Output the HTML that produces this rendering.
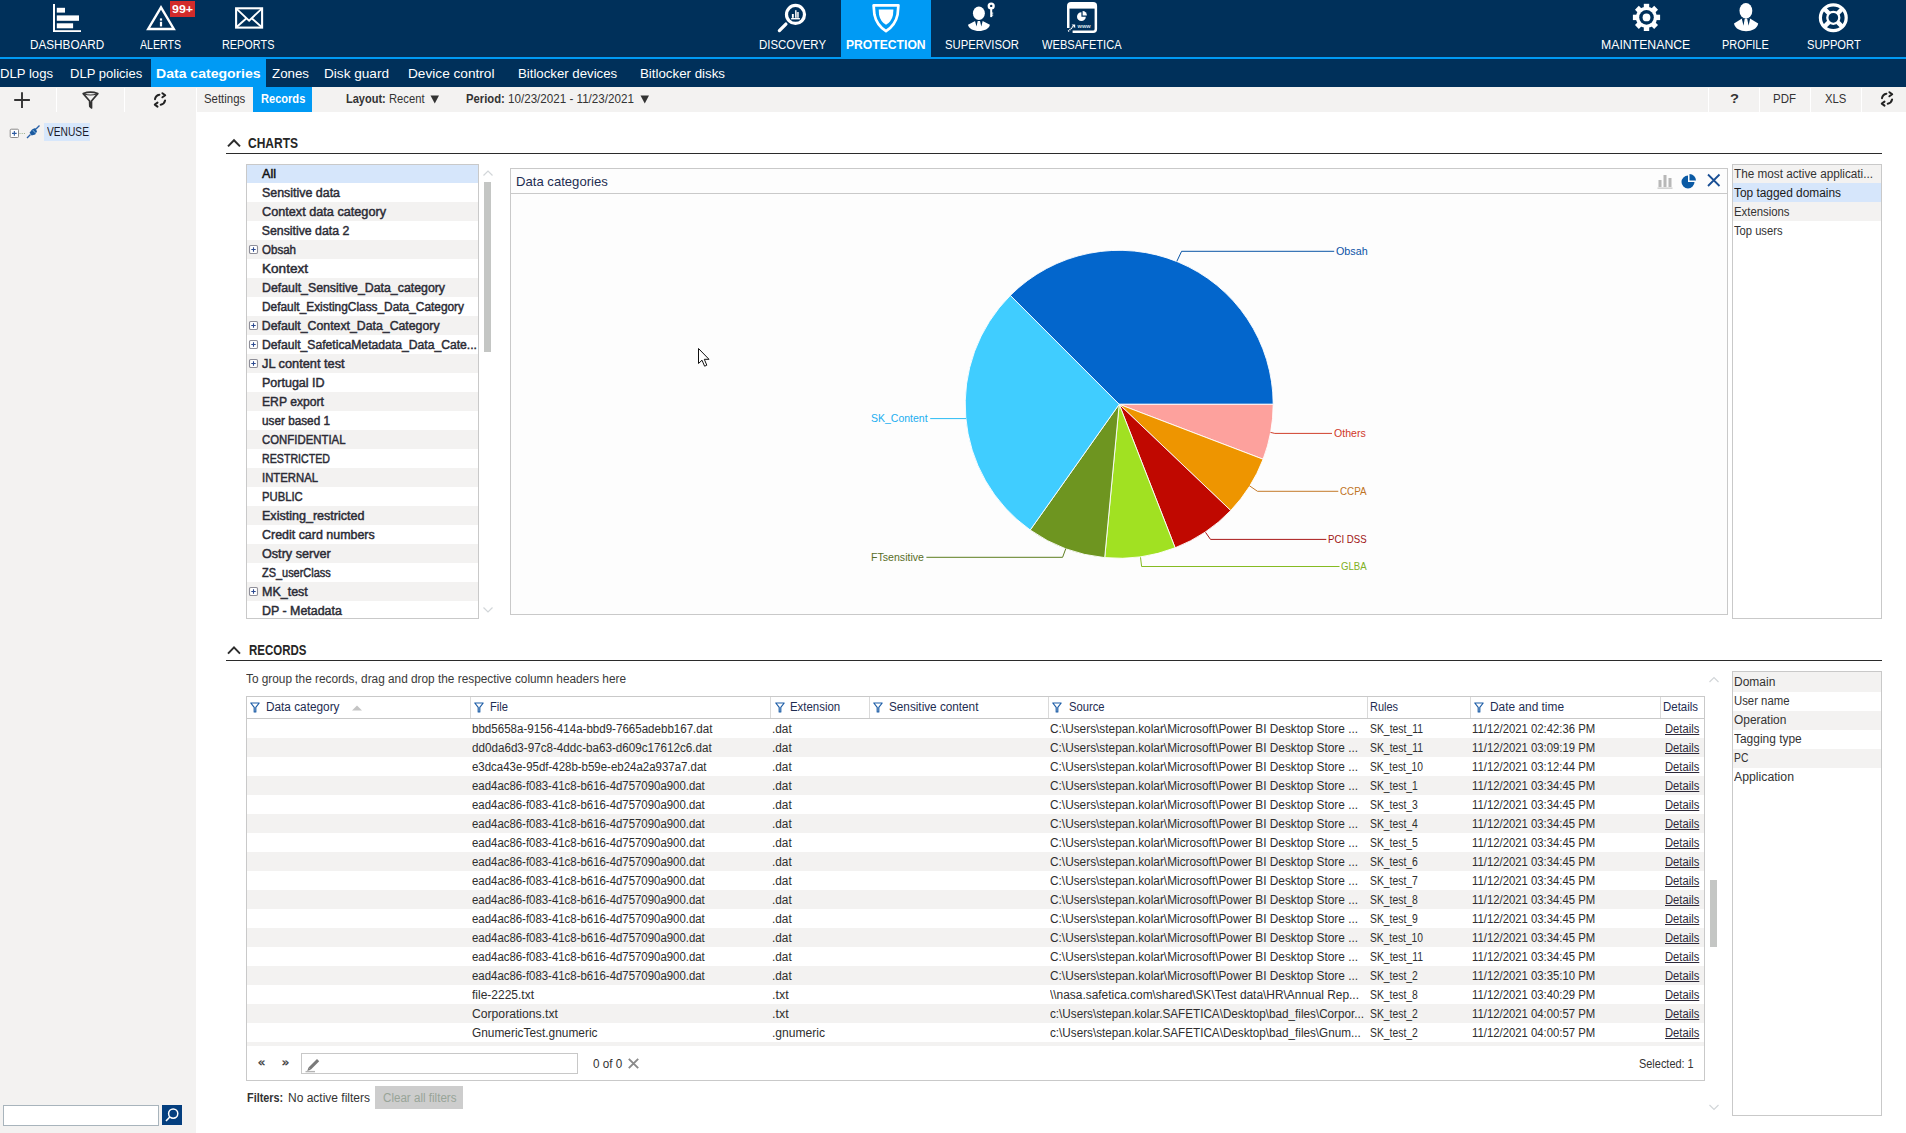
<!DOCTYPE html>
<html><head><meta charset="utf-8"><title>Safetica</title>
<style>
html,body{margin:0;padding:0;width:1906px;height:1133px;overflow:hidden;background:#fff;font-family:"Liberation Sans", sans-serif;}
.t{position:absolute;white-space:pre;line-height:1;}
</style></head><body>
<div style="position:absolute;left:0px;top:0px;width:1906px;height:57px;background:#00305a;"></div>
<div style="position:absolute;left:0px;top:57px;width:1906px;height:2px;background:#009af4;"></div>
<div style="position:absolute;left:0px;top:59px;width:1906px;height:28px;background:#00305a;"></div>
<div style="position:absolute;left:841px;top:0px;width:90px;height:57px;background:#009af4;"></div>
<div class="t" style="left:30.2px;top:38.43px;font-size:13.2px;font-weight:400;color:#ffffff;transform:scaleX(0.8893);transform-origin:0 0;">DASHBOARD</div>
<div class="t" style="left:140.3px;top:38.43px;font-size:13.2px;font-weight:400;color:#ffffff;transform:scaleX(0.8046);transform-origin:0 0;">ALERTS</div>
<div class="t" style="left:222.2px;top:38.43px;font-size:13.2px;font-weight:400;color:#ffffff;transform:scaleX(0.8250);transform-origin:0 0;">REPORTS</div>
<div class="t" style="left:759px;top:38.43px;font-size:13.2px;font-weight:400;color:#ffffff;transform:scaleX(0.8650);transform-origin:0 0;">DISCOVERY</div>
<div class="t" style="left:846.4px;top:38.43px;font-size:13.2px;font-weight:700;color:#ffffff;transform:scaleX(0.9207);transform-origin:0 0;">PROTECTION</div>
<div class="t" style="left:945px;top:38.43px;font-size:13.2px;font-weight:400;color:#ffffff;transform:scaleX(0.8581);transform-origin:0 0;">SUPERVISOR</div>
<div class="t" style="left:1042.4px;top:38.43px;font-size:13.2px;font-weight:400;color:#ffffff;transform:scaleX(0.8420);transform-origin:0 0;">WEBSAFETICA</div>
<div class="t" style="left:1601.4px;top:38.43px;font-size:13.2px;font-weight:400;color:#ffffff;transform:scaleX(0.9304);transform-origin:0 0;">MAINTENANCE</div>
<div class="t" style="left:1722px;top:38.43px;font-size:13.2px;font-weight:400;color:#ffffff;transform:scaleX(0.8275);transform-origin:0 0;">PROFILE</div>
<div class="t" style="left:1807px;top:38.43px;font-size:13.2px;font-weight:400;color:#ffffff;transform:scaleX(0.8455);transform-origin:0 0;">SUPPORT</div>
<svg style="position:absolute;left:50px;top:2px" width="34" height="32" viewBox="0 0 34 32"><rect x="3" y="2" width="2" height="28" fill="#ffffff"/><rect x="3" y="28.2" width="28" height="1.8" fill="#ffffff"/><rect x="6.8" y="5.8" width="8.2" height="4.8" fill="#ffffff"/><rect x="6.8" y="13.4" width="22.2" height="5.4" fill="#ffffff"/><rect x="6.8" y="21.3" width="16.3" height="5" fill="#ffffff"/></svg>
<svg style="position:absolute;left:144px;top:3px" width="34" height="30" viewBox="0 0 34 30"><path d="M17 4.3 L29.8 26 L4.2 26 Z" fill="none" stroke="#ffffff" stroke-width="2.4" stroke-linejoin="miter"/><rect x="15.9" y="15.4" width="2.2" height="2.2" fill="#ffffff"/><rect x="15.9" y="18.8" width="2.2" height="4.6" fill="#ffffff"/></svg>
<div style="position:absolute;left:170px;top:1px;width:25px;height:16px;background:#d22b2b;"></div>
<div class="t" style="left:171.6px;top:4.29px;font-size:11px;font-weight:700;color:#ffffff;transform:scaleX(1.1247);transform-origin:0 0;">99+</div>
<svg style="position:absolute;left:233px;top:5px" width="33" height="26" viewBox="0 0 33 26"><rect x="3.1" y="3.3" width="26" height="19.3" fill="none" stroke="#ffffff" stroke-width="2.1"/><path d="M3.6 3.9 L16.1 15.6 L28.6 3.9" fill="none" stroke="#ffffff" stroke-width="1.9"/><path d="M3.6 22 L13.2 13.5 M28.6 22 L19 13.5" fill="none" stroke="#ffffff" stroke-width="1.9"/></svg>
<svg style="position:absolute;left:776px;top:1px" width="34" height="34" viewBox="0 0 34 34"><circle cx="19.5" cy="13.45" r="9" fill="none" stroke="#ffffff" stroke-width="3.2"/><path d="M3.4 29.6 L9.9 23.1" stroke="#ffffff" stroke-width="3.3" stroke-linecap="round"/><rect x="15.9" y="13" width="1.9" height="3.8" fill="#ffffff"/><rect x="19.1" y="9.2" width="1.4" height="7.6" fill="#ffffff"/><rect x="20.5" y="11" width="2.4" height="5.8" fill="#c8d0d8"/><rect x="15.1" y="17" width="8.8" height="1.4" fill="#ffffff"/></svg>
<svg style="position:absolute;left:868px;top:1px" width="36" height="34" viewBox="0 0 36 34"><path d="M5.6 4.3 L30.4 4.3 L29.6 13.5 Q27.5 24 18 30.2 Q8.5 24 6.4 13.5 Z" fill="none" stroke="#ffffff" stroke-width="2.7" stroke-linejoin="round"/><path d="M10.7 8.6 L25.4 8.6 L25 14 Q23.5 20.8 18 23.8 Q12.5 20.8 11.1 14 Z" fill="#ffffff"/></svg>
<svg style="position:absolute;left:964px;top:1px" width="34" height="34" viewBox="0 0 34 34"><ellipse cx="14.9" cy="12.2" rx="5.95" ry="6.8" fill="#ffffff"/><path d="M4 23.8 L11.2 19.9 L18.6 19.9 L25.9 23.8 C24.4 32.1 5.5 32.1 4 23.8 Z" fill="#ffffff"/><path d="M10.9 19.6 L13.8 19.6 L12.5 25.6 Z M15.9 19.6 L18.8 19.6 L17.3 25.6 Z" fill="#00305a"/><circle cx="27.2" cy="5" r="3.6" fill="#ffffff"/><circle cx="27.2" cy="4.9" r="1.2" fill="#00305a"/><rect x="26.2" y="7.5" width="2" height="8.6" fill="#ffffff"/><rect x="28" y="11.6" width="1.2" height="1" fill="#ffffff"/><rect x="28" y="13.6" width="1.2" height="1" fill="#ffffff"/></svg>
<svg style="position:absolute;left:1064px;top:1px" width="36" height="34" viewBox="0 0 36 34"><path d="M4.25 27 L4.25 5 Q4.25 2.2 7 2.2 L29.1 2.2 Q31.85 2.2 31.85 5 L31.85 28 Q31.85 30.75 29.1 30.75 L8.6 30.75" fill="none" stroke="#ffffff" stroke-width="2.5"/><rect x="4" y="2" width="28.1" height="5.6" fill="#ffffff"/><path d="M17.4 11.3 A4.4 4.4 0 1 0 21.8 15.7 L17.4 15.7 Z" fill="#ffffff"/><path d="M18.6 10.1 A4.3 4.3 0 0 1 22.9 14.4 L18.6 14.4 Z" fill="#ffffff"/><path d="M4.2 30.4 L9.6 25" stroke="#ffffff" stroke-width="1.5" stroke-dasharray="1.2 0.7"/><path d="M7.6 23.6 L11.2 23.6 L11.2 27.2 Z" fill="#ffffff"/><text x="13.6" y="27.3" font-family="Liberation Sans" font-size="5.6" font-weight="700" fill="#dde4ea">www</text></svg>
<svg style="position:absolute;left:1631.5px;top:3.4px" width="29" height="29" viewBox="0 0 29 29"><rect x="11.8" y="0.8" width="5.4" height="6" fill="#ffffff" transform="rotate(0 14.5 14.4)"/><rect x="11.8" y="0.8" width="5.4" height="6" fill="#ffffff" transform="rotate(45 14.5 14.4)"/><rect x="11.8" y="0.8" width="5.4" height="6" fill="#ffffff" transform="rotate(90 14.5 14.4)"/><rect x="11.8" y="0.8" width="5.4" height="6" fill="#ffffff" transform="rotate(135 14.5 14.4)"/><rect x="11.8" y="0.8" width="5.4" height="6" fill="#ffffff" transform="rotate(180 14.5 14.4)"/><rect x="11.8" y="0.8" width="5.4" height="6" fill="#ffffff" transform="rotate(225 14.5 14.4)"/><rect x="11.8" y="0.8" width="5.4" height="6" fill="#ffffff" transform="rotate(270 14.5 14.4)"/><rect x="11.8" y="0.8" width="5.4" height="6" fill="#ffffff" transform="rotate(315 14.5 14.4)"/><circle cx="14.5" cy="14.4" r="10.6" fill="#ffffff"/><circle cx="14.5" cy="14.4" r="7.3" fill="#00305a"/><circle cx="14.5" cy="14.4" r="3.9" fill="#ffffff"/></svg>
<svg style="position:absolute;left:1731px;top:1px" width="30" height="32" viewBox="0 0 30 32"><ellipse cx="14.9" cy="9.65" rx="6.4" ry="7.75" fill="#ffffff"/><path d="M3 22.5 L11 17.4 L19 17.4 L27.2 22.5 C25.6 32.7 4.6 32.7 3 22.5 Z" fill="#ffffff"/><path d="M10.7 17.2 L13.8 17.2 L12.5 24.8 Z M16.1 17.2 L19.2 17.2 L17.6 24.8 Z" fill="#00305a"/></svg>
<svg style="position:absolute;left:1817px;top:1px" width="34" height="34" viewBox="0 0 34 34"><circle cx="16.3" cy="16.8" r="12.9" fill="none" stroke="#ffffff" stroke-width="3.2"/><circle cx="16.3" cy="16.8" r="6" fill="none" stroke="#ffffff" stroke-width="2.3"/><g stroke="#ffffff" stroke-width="4.4"><path d="M7.3 7.8 L12 12.5 M25.3 7.8 L20.6 12.5 M7.3 25.8 L12 21.1 M25.3 25.8 L20.6 21.1"/></g></svg>
<div style="position:absolute;left:151px;top:59px;width:115px;height:28px;background:#009af4;"></div>
<div class="t" style="left:0px;top:66.89px;font-size:13.6px;font-weight:400;color:#ffffff;transform:scaleX(0.9650);transform-origin:0 0;">DLP logs</div>
<div class="t" style="left:69.5px;top:66.89px;font-size:13.6px;font-weight:400;color:#ffffff;transform:scaleX(0.9587);transform-origin:0 0;">DLP policies</div>
<div class="t" style="left:156.4px;top:66.89px;font-size:13.6px;font-weight:700;color:#ffffff;transform:scaleX(1.0331);transform-origin:0 0;">Data categories</div>
<div class="t" style="left:272px;top:66.89px;font-size:13.6px;font-weight:400;color:#ffffff;transform:scaleX(0.9793);transform-origin:0 0;">Zones</div>
<div class="t" style="left:324px;top:66.89px;font-size:13.6px;font-weight:400;color:#ffffff;">Disk guard</div>
<div class="t" style="left:408.3px;top:66.89px;font-size:13.6px;font-weight:400;color:#ffffff;transform:scaleX(1.0042);transform-origin:0 0;">Device control</div>
<div class="t" style="left:517.5px;top:66.89px;font-size:13.6px;font-weight:400;color:#ffffff;transform:scaleX(0.9725);transform-origin:0 0;">Bitlocker devices</div>
<div class="t" style="left:639.7px;top:66.89px;font-size:13.6px;font-weight:400;color:#ffffff;transform:scaleX(0.9784);transform-origin:0 0;">Bitlocker disks</div>
<div style="position:absolute;left:0px;top:87px;width:1906px;height:25px;background:#f3f2f1;"></div>
<div style="position:absolute;left:253px;top:87px;width:59px;height:25px;background:#009af4;"></div>
<div style="position:absolute;left:196px;top:112px;width:1710px;height:1021px;background:#ffffff;"></div>
<div style="position:absolute;left:56px;top:88px;width:1px;height:24px;background:#ffffff;"></div>
<div style="position:absolute;left:124px;top:88px;width:1px;height:24px;background:#ffffff;"></div>
<div style="position:absolute;left:195.5px;top:88px;width:1px;height:24px;background:#ffffff;"></div>
<div style="position:absolute;left:1708px;top:88px;width:1px;height:24px;background:#ffffff;"></div>
<div style="position:absolute;left:1759px;top:88px;width:1px;height:24px;background:#ffffff;"></div>
<div style="position:absolute;left:1810px;top:88px;width:1px;height:24px;background:#ffffff;"></div>
<div style="position:absolute;left:1861px;top:88px;width:1px;height:24px;background:#ffffff;"></div>
<div class="t" style="left:204.4px;top:92.73px;font-size:12.6px;font-weight:400;color:#333333;transform:scaleX(0.9052);transform-origin:0 0;">Settings</div>
<div class="t" style="left:260.7px;top:92.73px;font-size:12.6px;font-weight:700;color:#ffffff;transform:scaleX(0.8789);transform-origin:0 0;">Records</div>
<div class="t" style="left:346.4px;top:92.73px;font-size:12.6px;font-weight:700;color:#333333;transform:scaleX(0.8750);transform-origin:0 0;">Layout:</div>
<div class="t" style="left:389.4px;top:92.73px;font-size:12.6px;font-weight:400;color:#333333;transform:scaleX(0.8896);transform-origin:0 0;">Recent</div>
<svg style="position:absolute;left:430px;top:95px" width="10" height="9" viewBox="0 0 10 9"><path d="M0.5 0.5 L9 0.5 L4.75 8.5 Z" fill="#333333"/></svg>
<div class="t" style="left:466.4px;top:92.73px;font-size:12.6px;font-weight:700;color:#333333;transform:scaleX(0.8942);transform-origin:0 0;">Period:</div>
<div class="t" style="left:508.4px;top:92.73px;font-size:12.6px;font-weight:400;color:#333333;transform:scaleX(0.9235);transform-origin:0 0;">10/23/2021 - 11/23/2021</div>
<svg style="position:absolute;left:640px;top:95px" width="10" height="9" viewBox="0 0 10 9"><path d="M0.5 0.5 L9 0.5 L4.75 8.5 Z" fill="#333333"/></svg>
<div class="t" style="left:1729.7px;top:92.40px;font-size:13px;font-weight:700;color:#333333;transform:scaleX(1.1316);transform-origin:0 0;">?</div>
<div class="t" style="left:1773px;top:92.73px;font-size:12.6px;font-weight:400;color:#333333;transform:scaleX(0.9132);transform-origin:0 0;">PDF</div>
<div class="t" style="left:1824.6px;top:92.73px;font-size:12.6px;font-weight:400;color:#333333;transform:scaleX(0.8987);transform-origin:0 0;">XLS</div>
<svg style="position:absolute;left:12px;top:90px" width="20" height="20" viewBox="0 0 20 20"><path d="M2.2 10 L17.9 10 M10 2.3 L10 18" stroke="#333" stroke-width="1.9"/></svg>
<svg style="position:absolute;left:80px;top:90px" width="21" height="20" viewBox="0 0 21 20"><path d="M3.2 3.6 Q10.6 0.8 17.8 3.6 L11.5 11 L11.5 18 L9.8 16.3 L9.6 11 Z" fill="none" stroke="#333" stroke-width="1.7" stroke-linejoin="round"/><path d="M4 4 Q10.5 6 17 4" fill="none" stroke="#333" stroke-width="1.2"/><path d="M9.8 12 L11.5 12 L11.5 18 L9.8 16 Z" fill="#333"/></svg>
<svg style="position:absolute;left:151px;top:90px" width="18" height="19" viewBox="0 0 18 19"><g fill="none" stroke="#222" stroke-width="2" stroke-linecap="round" stroke-linejoin="round"><path d="M4 9.2 Q4.6 5.3 8.4 4.7"/><path d="M11.4 3.2 L14.2 5.3 L11.4 7.3"/><path d="M14.1 10.4 Q13.4 14 9.7 14.7"/><path d="M6.5 12.6 L3.8 14.6 L6.5 16.6"/></g></svg>
<svg style="position:absolute;left:1878px;top:89px" width="18" height="19" viewBox="0 0 18 19"><g fill="none" stroke="#222" stroke-width="2" stroke-linecap="round" stroke-linejoin="round"><path d="M4 9.2 Q4.6 5.3 8.4 4.7"/><path d="M11.4 3.2 L14.2 5.3 L11.4 7.3"/><path d="M14.1 10.4 Q13.4 14 9.7 14.7"/><path d="M6.5 12.6 L3.8 14.6 L6.5 16.6"/></g></svg>
<div style="position:absolute;left:0px;top:112px;width:196px;height:1021px;background:#f3f2f1;"></div>
<div style="position:absolute;left:44px;top:123px;width:46px;height:18px;background:#d7e7fb;"></div>
<div class="t" style="left:47px;top:125.79px;font-size:12.3px;font-weight:400;color:#1a1a2a;transform:scaleX(0.8304);transform-origin:0 0;">VENUSE</div>
<svg style="position:absolute;left:9px;top:128px" width="11" height="11" viewBox="0 0 11 11"><rect x="1.2" y="1.2" width="8.3" height="8.3" rx="1" fill="#fff" stroke="#8a8a8a" stroke-width="1"/><path d="M3 5.35 L7.7 5.35 M5.35 3 L5.35 7.7" stroke="#2c5aa0" stroke-width="1.1"/></svg>
<svg style="position:absolute;left:19px;top:132px" width="7" height="3" viewBox="0 0 7 3"><path d="M0.5 1.5 L6 1.5" stroke="#9ab08a" stroke-width="1" stroke-dasharray="1 1.2"/></svg>
<svg style="position:absolute;left:26px;top:125px" width="15" height="14" viewBox="0 0 15 14"><path d="M1 13 L4.5 9.5 M10 4 L13.5 0.6" stroke="#2860a8" stroke-width="1.4"/><path d="M3.6 7.8 L6.2 4.2 L9.4 3 L11 6.4 L9.2 9.6 L5.6 10.6 Z" fill="#1a5aa0"/><path d="M6.5 5 L9.8 8.2" stroke="#9cc8e8" stroke-width="0.9"/></svg>
<div style="position:absolute;left:3px;top:1105px;width:156px;height:21px;box-sizing:border-box;border:1px solid #a8b4bc;background:#ffffff;"></div>
<div style="position:absolute;left:162px;top:1105px;width:20px;height:20px;background:#043f7f;"></div>
<svg style="position:absolute;left:162px;top:1105px" width="20" height="20" viewBox="0 0 20 20"><circle cx="11.2" cy="8.6" r="4.6" fill="none" stroke="#fff" stroke-width="1.5"/><path d="M4 16 L7.8 12" stroke="#fff" stroke-width="1.6"/></svg>
<svg style="position:absolute;left:226px;top:136px" width="16" height="13" viewBox="0 0 16 13"><path d="M2 10.4 L8 4.2 L14 10.4" fill="none" stroke="#2d2d2d" stroke-width="2"/></svg>
<div class="t" style="left:248px;top:135.88px;font-size:14.2px;font-weight:700;color:#262626;transform:scaleX(0.8457);transform-origin:0 0;">CHARTS</div>
<div style="position:absolute;left:226px;top:153px;width:1656px;height:1px;background:#2b2b2b;"></div>
<div style="position:absolute;left:246px;top:164px;width:233px;height:455px;box-sizing:border-box;border:1px solid #c9c9c9;background:#ffffff;"></div>
<div style="position:absolute;left:247px;top:165px;width:231px;height:18px;background:#d6e6fb;"></div>
<div class="t" style="left:261.8px;top:168.19px;font-size:12.3px;font-weight:400;color:#111;transform:scaleX(1.0240);transform-origin:0 0;-webkit-text-stroke:0.45px currentColor;">All</div>
<div class="t" style="left:261.8px;top:187.19px;font-size:12.3px;font-weight:400;color:#2b2b35;transform:scaleX(1.0097);transform-origin:0 0;-webkit-text-stroke:0.45px currentColor;">Sensitive data</div>
<div style="position:absolute;left:247px;top:202px;width:231px;height:19px;background:#f3f2f1;"></div>
<div class="t" style="left:261.8px;top:206.19px;font-size:12.3px;font-weight:400;color:#2b2b35;transform:scaleX(1.0306);transform-origin:0 0;-webkit-text-stroke:0.45px currentColor;">Context data category</div>
<div class="t" style="left:261.8px;top:225.19px;font-size:12.3px;font-weight:400;color:#2b2b35;-webkit-text-stroke:0.45px currentColor;">Sensitive data 2</div>
<div style="position:absolute;left:247px;top:240px;width:231px;height:19px;background:#f3f2f1;"></div>
<div class="t" style="left:261.8px;top:244.19px;font-size:12.3px;font-weight:400;color:#2b2b35;transform:scaleX(0.9383);transform-origin:0 0;-webkit-text-stroke:0.45px currentColor;">Obsah</div>
<svg style="position:absolute;left:248px;top:244px" width="11" height="11" viewBox="0 0 11 11"><rect x="1.5" y="1.5" width="8" height="8" rx="1.2" fill="#fff" stroke="#8e8e98" stroke-width="1.1"/><path d="M3.3 5.5 L7.7 5.5 M5.5 3.3 L5.5 7.7" stroke="#2c4a90" stroke-width="1.1"/></svg>
<div class="t" style="left:261.8px;top:263.19px;font-size:12.3px;font-weight:400;color:#2b2b35;transform:scaleX(1.1030);transform-origin:0 0;-webkit-text-stroke:0.45px currentColor;">Kontext</div>
<div style="position:absolute;left:247px;top:278px;width:231px;height:19px;background:#f3f2f1;"></div>
<div class="t" style="left:261.8px;top:282.19px;font-size:12.3px;font-weight:400;color:#2b2b35;transform:scaleX(1.0027);transform-origin:0 0;-webkit-text-stroke:0.45px currentColor;">Default_Sensitive_Data_category</div>
<div class="t" style="left:261.8px;top:301.19px;font-size:12.3px;font-weight:400;color:#2b2b35;transform:scaleX(0.9658);transform-origin:0 0;-webkit-text-stroke:0.45px currentColor;">Default_ExistingClass_Data_Category</div>
<div style="position:absolute;left:247px;top:316px;width:231px;height:19px;background:#f3f2f1;"></div>
<div class="t" style="left:261.8px;top:320.19px;font-size:12.3px;font-weight:400;color:#2b2b35;-webkit-text-stroke:0.45px currentColor;">Default_Context_Data_Category</div>
<svg style="position:absolute;left:248px;top:320px" width="11" height="11" viewBox="0 0 11 11"><rect x="1.5" y="1.5" width="8" height="8" rx="1.2" fill="#fff" stroke="#8e8e98" stroke-width="1.1"/><path d="M3.3 5.5 L7.7 5.5 M5.5 3.3 L5.5 7.7" stroke="#2c4a90" stroke-width="1.1"/></svg>
<div class="t" style="left:261.8px;top:339.19px;font-size:12.3px;font-weight:400;color:#2b2b35;transform:scaleX(0.9890);transform-origin:0 0;-webkit-text-stroke:0.45px currentColor;">Default_SafeticaMetadata_Data_Cate...</div>
<svg style="position:absolute;left:248px;top:339px" width="11" height="11" viewBox="0 0 11 11"><rect x="1.5" y="1.5" width="8" height="8" rx="1.2" fill="#fff" stroke="#8e8e98" stroke-width="1.1"/><path d="M3.3 5.5 L7.7 5.5 M5.5 3.3 L5.5 7.7" stroke="#2c4a90" stroke-width="1.1"/></svg>
<div style="position:absolute;left:247px;top:354px;width:231px;height:19px;background:#f3f2f1;"></div>
<div class="t" style="left:261.8px;top:358.19px;font-size:12.3px;font-weight:400;color:#2b2b35;transform:scaleX(1.0386);transform-origin:0 0;-webkit-text-stroke:0.45px currentColor;">JL content test</div>
<svg style="position:absolute;left:248px;top:358px" width="11" height="11" viewBox="0 0 11 11"><rect x="1.5" y="1.5" width="8" height="8" rx="1.2" fill="#fff" stroke="#8e8e98" stroke-width="1.1"/><path d="M3.3 5.5 L7.7 5.5 M5.5 3.3 L5.5 7.7" stroke="#2c4a90" stroke-width="1.1"/></svg>
<div class="t" style="left:261.8px;top:377.19px;font-size:12.3px;font-weight:400;color:#2b2b35;transform:scaleX(1.0176);transform-origin:0 0;-webkit-text-stroke:0.45px currentColor;">Portugal ID</div>
<div style="position:absolute;left:247px;top:392px;width:231px;height:19px;background:#f3f2f1;"></div>
<div class="t" style="left:261.8px;top:396.19px;font-size:12.3px;font-weight:400;color:#2b2b35;transform:scaleX(0.9895);transform-origin:0 0;-webkit-text-stroke:0.45px currentColor;">ERP export</div>
<div class="t" style="left:261.8px;top:415.19px;font-size:12.3px;font-weight:400;color:#2b2b35;transform:scaleX(0.9563);transform-origin:0 0;-webkit-text-stroke:0.45px currentColor;">user based 1</div>
<div style="position:absolute;left:247px;top:430px;width:231px;height:19px;background:#f3f2f1;"></div>
<div class="t" style="left:261.8px;top:434.19px;font-size:12.3px;font-weight:400;color:#2b2b35;transform:scaleX(0.9258);transform-origin:0 0;-webkit-text-stroke:0.45px currentColor;">CONFIDENTIAL</div>
<div class="t" style="left:261.8px;top:453.19px;font-size:12.3px;font-weight:400;color:#2b2b35;transform:scaleX(0.8654);transform-origin:0 0;-webkit-text-stroke:0.45px currentColor;">RESTRICTED</div>
<div style="position:absolute;left:247px;top:468px;width:231px;height:19px;background:#f3f2f1;"></div>
<div class="t" style="left:261.8px;top:472.19px;font-size:12.3px;font-weight:400;color:#2b2b35;transform:scaleX(0.9209);transform-origin:0 0;-webkit-text-stroke:0.45px currentColor;">INTERNAL</div>
<div class="t" style="left:261.8px;top:491.19px;font-size:12.3px;font-weight:400;color:#2b2b35;transform:scaleX(0.9162);transform-origin:0 0;-webkit-text-stroke:0.45px currentColor;">PUBLIC</div>
<div style="position:absolute;left:247px;top:506px;width:231px;height:19px;background:#f3f2f1;"></div>
<div class="t" style="left:261.8px;top:510.19px;font-size:12.3px;font-weight:400;color:#2b2b35;transform:scaleX(1.0202);transform-origin:0 0;-webkit-text-stroke:0.45px currentColor;">Existing_restricted</div>
<div class="t" style="left:261.8px;top:529.19px;font-size:12.3px;font-weight:400;color:#2b2b35;transform:scaleX(1.0116);transform-origin:0 0;-webkit-text-stroke:0.45px currentColor;">Credit card numbers</div>
<div style="position:absolute;left:247px;top:544px;width:231px;height:19px;background:#f3f2f1;"></div>
<div class="t" style="left:261.8px;top:548.19px;font-size:12.3px;font-weight:400;color:#2b2b35;transform:scaleX(1.0259);transform-origin:0 0;-webkit-text-stroke:0.45px currentColor;">Ostry server</div>
<div class="t" style="left:261.8px;top:567.19px;font-size:12.3px;font-weight:400;color:#2b2b35;transform:scaleX(0.8895);transform-origin:0 0;-webkit-text-stroke:0.45px currentColor;">ZS_userClass</div>
<div style="position:absolute;left:247px;top:582px;width:231px;height:19px;background:#f3f2f1;"></div>
<div class="t" style="left:261.8px;top:586.19px;font-size:12.3px;font-weight:400;color:#2b2b35;transform:scaleX(1.0153);transform-origin:0 0;-webkit-text-stroke:0.45px currentColor;">MK_test</div>
<svg style="position:absolute;left:248px;top:586px" width="11" height="11" viewBox="0 0 11 11"><rect x="1.5" y="1.5" width="8" height="8" rx="1.2" fill="#fff" stroke="#8e8e98" stroke-width="1.1"/><path d="M3.3 5.5 L7.7 5.5 M5.5 3.3 L5.5 7.7" stroke="#2c4a90" stroke-width="1.1"/></svg>
<div class="t" style="left:261.8px;top:605.19px;font-size:12.3px;font-weight:400;color:#2b2b35;transform:scaleX(1.0093);transform-origin:0 0;-webkit-text-stroke:0.45px currentColor;">DP - Metadata</div>
<div style="position:absolute;left:484px;top:182px;width:7px;height:170px;background:#c4c6c4;"></div>
<svg style="position:absolute;left:482px;top:169px" width="12" height="8" viewBox="0 0 12 8"><path d="M1.5 6.5 L6 2 L10.5 6.5" fill="none" stroke="#d2d6d9" stroke-width="1.2"/></svg>
<svg style="position:absolute;left:482px;top:606px" width="12" height="8" viewBox="0 0 12 8"><path d="M1.5 1.5 L6 6 L10.5 1.5" fill="none" stroke="#d2d6d9" stroke-width="1.2"/></svg>
<div style="position:absolute;left:510px;top:168px;width:1218px;height:447px;box-sizing:border-box;border:1px solid #c9c9c9;background:#fdfdfd;"></div>
<div style="position:absolute;left:511px;top:193px;width:1216px;height:1px;background:#c9c9c9;"></div>
<div class="t" style="left:515.5px;top:175.53px;font-size:12.6px;font-weight:400;color:#1e2d52;transform:scaleX(1.0406);transform-origin:0 0;">Data categories</div>
<svg style="position:absolute;left:1657px;top:172px" width="17" height="17" viewBox="0 0 17 17"><rect x="1.5" y="8" width="3" height="7" fill="#b8b8b8"/><rect x="6.5" y="3" width="3" height="12" fill="#b8b8b8"/><rect x="11.5" y="6" width="3" height="9" fill="#b8b8b8"/><rect x="0.5" y="15.6" width="15" height="1" fill="#b8b8b8"/></svg>
<svg style="position:absolute;left:1680px;top:172px" width="17" height="17" viewBox="0 0 17 17"><path d="M8 3.5 A6.5 6.5 0 1 0 14.5 10 L8 10 Z" fill="#0b5aa4"/><path d="M9.5 2 A6.5 6.5 0 0 1 16 8.5 L9.5 8.5 Z" fill="#0b5aa4"/></svg>
<svg style="position:absolute;left:1706px;top:172px" width="16" height="16" viewBox="0 0 16 16"><path d="M2 2.5 L13.5 14 M13.5 2.5 L2 14" stroke="#1a4f94" stroke-width="1.8"/></svg>
<div style="position:absolute;left:1732px;top:164px;width:150px;height:455px;box-sizing:border-box;border:1px solid #c9c9c9;background:#ffffff;"></div>
<div style="position:absolute;left:1733px;top:165px;width:148px;height:18px;background:#f3f2f1;"></div>
<div class="t" style="left:1733.9px;top:167.99px;font-size:12.3px;font-weight:400;color:#333;transform:scaleX(0.9548);transform-origin:0 0;">The most active applicati...</div>
<div style="position:absolute;left:1733px;top:183px;width:148px;height:19px;background:#d6e6fb;"></div>
<div class="t" style="left:1733.9px;top:186.99px;font-size:12.3px;font-weight:400;color:#1a1a1a;transform:scaleX(0.9661);transform-origin:0 0;">Top tagged domains</div>
<div style="position:absolute;left:1733px;top:202px;width:148px;height:19px;background:#f3f2f1;"></div>
<div class="t" style="left:1733.9px;top:205.99px;font-size:12.3px;font-weight:400;color:#333;transform:scaleX(0.9226);transform-origin:0 0;">Extensions</div>
<div style="position:absolute;left:1733px;top:221px;width:148px;height:19px;background:#ffffff;"></div>
<div class="t" style="left:1733.9px;top:224.99px;font-size:12.3px;font-weight:400;color:#333;transform:scaleX(0.9097);transform-origin:0 0;">Top users</div>
<svg style="position:absolute;left:800px;top:160px" width="700" height="460" viewBox="0 0 700 460"><path d="M319.20 244.30 L210.31 135.41 A154 154 0 0 1 473.20 244.30 Z" fill="#0366cc" stroke="#ffffff" stroke-width="0.9" stroke-linejoin="round"/><path d="M319.20 244.30 L473.20 244.30 A154 154 0 0 1 463.07 299.24 Z" fill="#fda19d" stroke="#ffffff" stroke-width="0.9" stroke-linejoin="round"/><path d="M319.20 244.30 L463.07 299.24 A154 154 0 0 1 430.72 350.50 Z" fill="#ee9500" stroke="#ffffff" stroke-width="0.9" stroke-linejoin="round"/><path d="M319.20 244.30 L430.72 350.50 A154 154 0 0 1 375.14 387.78 Z" fill="#c00800" stroke="#ffffff" stroke-width="0.9" stroke-linejoin="round"/><path d="M319.20 244.30 L375.14 387.78 A154 154 0 0 1 304.71 397.62 Z" fill="#a1e122" stroke="#ffffff" stroke-width="0.9" stroke-linejoin="round"/><path d="M319.20 244.30 L304.71 397.62 A154 154 0 0 1 230.21 369.99 Z" fill="#6e9520" stroke="#ffffff" stroke-width="0.9" stroke-linejoin="round"/><path d="M319.20 244.30 L230.21 369.99 A154 154 0 0 1 210.31 135.41 Z" fill="#40cdff" stroke="#ffffff" stroke-width="0.9" stroke-linejoin="round"/><path d="M376.8 101.4 L381.6 91.3 L534.2 91.3" fill="none" stroke="#0b55a5" stroke-width="1"/><path d="M470.5 272.4 L474.8 273.4 L532 273.4" fill="none" stroke="#d0402c" stroke-width="1"/><path d="M449.3 325.7 L457.5 331.3 L538.3 331.3" fill="none" stroke="#c47a2a" stroke-width="1"/><path d="M405.5 372.3 L410.5 379.4 L526.3 379.4" fill="none" stroke="#a81818" stroke-width="1"/><path d="M340.5 397.3 L341.6 406.5 L539.5 406.5" fill="none" stroke="#86bb22" stroke-width="1"/><path d="M265.8 388.6 L262.6 397.3 L126.4 397.3" fill="none" stroke="#5d7d1e" stroke-width="1"/><path d="M166.1 258.6 L130.2 258.6" fill="none" stroke="#2cbcf4" stroke-width="1"/></svg>
<div class="t" style="left:1336.4px;top:245.66px;font-size:10.8px;font-weight:400;color:#0a52a6;transform:scaleX(0.9965);transform-origin:0 0;">Obsah</div>
<div class="t" style="left:1334.1px;top:427.86px;font-size:10.8px;font-weight:400;color:#d0392a;transform:scaleX(0.9813);transform-origin:0 0;">Others</div>
<div class="t" style="left:1340px;top:485.76px;font-size:10.8px;font-weight:400;color:#c07424;transform:scaleX(0.9109);transform-origin:0 0;">CCPA</div>
<div class="t" style="left:1328.4px;top:533.76px;font-size:10.8px;font-weight:400;color:#a01414;transform:scaleX(0.8935);transform-origin:0 0;">PCI DSS</div>
<div class="t" style="left:1340.9px;top:560.56px;font-size:10.8px;font-weight:400;color:#80b024;transform:scaleX(0.8920);transform-origin:0 0;">GLBA</div>
<div class="t" style="left:871.4px;top:413.06px;font-size:10.8px;font-weight:400;color:#22aef0;transform:scaleX(0.9719);transform-origin:0 0;">SK_Content</div>
<div class="t" style="left:871.4px;top:551.66px;font-size:10.8px;font-weight:400;color:#5a6e28;transform:scaleX(0.9815);transform-origin:0 0;">FTsensitive</div>
<svg style="position:absolute;left:697px;top:347px" width="14" height="22" viewBox="0 0 14 22"><path d="M1.5 1.5 L1.5 16.5 L5 13.2 L7.6 19.2 L9.8 18.2 L7.3 12.3 L12 12.3 Z" fill="#fff" stroke="#111" stroke-width="1" stroke-linejoin="round"/></svg>
<svg style="position:absolute;left:226px;top:643px" width="16" height="13" viewBox="0 0 16 13"><path d="M2 10.6 L8 4.4 L14 10.6" fill="none" stroke="#2d2d2d" stroke-width="2"/></svg>
<div class="t" style="left:248.8px;top:642.58px;font-size:14.2px;font-weight:700;color:#262626;transform:scaleX(0.8090);transform-origin:0 0;">RECORDS</div>
<div style="position:absolute;left:226px;top:660px;width:1656px;height:1px;background:#2b2b2b;"></div>
<div class="t" style="left:246.2px;top:672.59px;font-size:12.3px;font-weight:400;color:#3a3a3a;transform:scaleX(0.9618);transform-origin:0 0;">To group the records, drag and drop the respective column headers here</div>
<svg style="position:absolute;left:1708px;top:675px" width="12" height="9" viewBox="0 0 12 9"><path d="M1.5 7 L6 2.5 L10.5 7" fill="none" stroke="#d2d6d9" stroke-width="1.2"/></svg>
<svg style="position:absolute;left:1708px;top:1103px" width="12" height="9" viewBox="0 0 12 9"><path d="M1.5 2 L6 6.5 L10.5 2" fill="none" stroke="#d2d6d9" stroke-width="1.2"/></svg>
<div style="position:absolute;left:246px;top:696px;width:1459px;height:385px;box-sizing:border-box;border:1px solid #c9c9c9;background:#ffffff;"></div>
<div style="position:absolute;left:247px;top:718px;width:1457px;height:1px;background:#c9c9c9;"></div>
<div style="position:absolute;left:470px;top:697px;width:1px;height:21px;background:#dadada;"></div>
<div style="position:absolute;left:770px;top:697px;width:1px;height:21px;background:#dadada;"></div>
<div style="position:absolute;left:869px;top:697px;width:1px;height:21px;background:#dadada;"></div>
<div style="position:absolute;left:1048px;top:697px;width:1px;height:21px;background:#dadada;"></div>
<div style="position:absolute;left:1367px;top:697px;width:1px;height:21px;background:#dadada;"></div>
<div style="position:absolute;left:1470px;top:697px;width:1px;height:21px;background:#dadada;"></div>
<div style="position:absolute;left:1660px;top:697px;width:1px;height:21px;background:#dadada;"></div>
<svg style="position:absolute;left:250px;top:702px" width="10" height="11" viewBox="0 0 10 11"><path d="M0.8 1 L9.2 1 L5.8 5.4 L5.8 10 L4.2 10 L4.2 5.4 Z" fill="none" stroke="#1f5fa8" stroke-width="1.2" stroke-linejoin="round"/></svg>
<div class="t" style="left:266px;top:700.79px;font-size:12.3px;font-weight:400;color:#1e2d52;transform:scaleX(0.9600);transform-origin:0 0;">Data category</div>
<svg style="position:absolute;left:351px;top:704px" width="12" height="8" viewBox="0 0 12 8"><path d="M1 6.5 L6 1.5 L11 6.5 Z" fill="#c4c4c4"/></svg>
<svg style="position:absolute;left:474px;top:702px" width="10" height="11" viewBox="0 0 10 11"><path d="M0.8 1 L9.2 1 L5.8 5.4 L5.8 10 L4.2 10 L4.2 5.4 Z" fill="none" stroke="#1f5fa8" stroke-width="1.2" stroke-linejoin="round"/></svg>
<div class="t" style="left:490px;top:700.79px;font-size:12.3px;font-weight:400;color:#1e2d52;transform:scaleX(0.9078);transform-origin:0 0;">File</div>
<svg style="position:absolute;left:775px;top:702px" width="10" height="11" viewBox="0 0 10 11"><path d="M0.8 1 L9.2 1 L5.8 5.4 L5.8 10 L4.2 10 L4.2 5.4 Z" fill="none" stroke="#1f5fa8" stroke-width="1.2" stroke-linejoin="round"/></svg>
<div class="t" style="left:790.3px;top:700.79px;font-size:12.3px;font-weight:400;color:#1e2d52;transform:scaleX(0.9294);transform-origin:0 0;">Extension</div>
<svg style="position:absolute;left:873px;top:702px" width="10" height="11" viewBox="0 0 10 11"><path d="M0.8 1 L9.2 1 L5.8 5.4 L5.8 10 L4.2 10 L4.2 5.4 Z" fill="none" stroke="#1f5fa8" stroke-width="1.2" stroke-linejoin="round"/></svg>
<div class="t" style="left:889.3px;top:700.79px;font-size:12.3px;font-weight:400;color:#1e2d52;transform:scaleX(0.9546);transform-origin:0 0;">Sensitive content</div>
<svg style="position:absolute;left:1052px;top:702px" width="10" height="11" viewBox="0 0 10 11"><path d="M0.8 1 L9.2 1 L5.8 5.4 L5.8 10 L4.2 10 L4.2 5.4 Z" fill="none" stroke="#1f5fa8" stroke-width="1.2" stroke-linejoin="round"/></svg>
<div class="t" style="left:1068.5px;top:700.79px;font-size:12.3px;font-weight:400;color:#1e2d52;transform:scaleX(0.9110);transform-origin:0 0;">Source</div>
<div class="t" style="left:1370px;top:700.79px;font-size:12.3px;font-weight:400;color:#1e2d52;transform:scaleX(0.8902);transform-origin:0 0;">Rules</div>
<svg style="position:absolute;left:1474px;top:702px" width="10" height="11" viewBox="0 0 10 11"><path d="M0.8 1 L9.2 1 L5.8 5.4 L5.8 10 L4.2 10 L4.2 5.4 Z" fill="none" stroke="#1f5fa8" stroke-width="1.2" stroke-linejoin="round"/></svg>
<div class="t" style="left:1490px;top:700.79px;font-size:12.3px;font-weight:400;color:#1e2d52;transform:scaleX(0.9665);transform-origin:0 0;">Date and time</div>
<div class="t" style="left:1663px;top:700.79px;font-size:12.3px;font-weight:400;color:#1e2d52;transform:scaleX(0.9310);transform-origin:0 0;">Details</div>
<div class="t" style="left:472px;top:722.79px;font-size:12.3px;font-weight:400;color:#2e2e2e;transform:scaleX(0.9400);transform-origin:0 0;">bbd5658a-9156-414a-bbd9-7665adebb167.dat</div>
<div class="t" style="left:772.3px;top:722.79px;font-size:12.3px;font-weight:400;color:#2e2e2e;transform:scaleX(0.9602);transform-origin:0 0;">.dat</div>
<div class="t" style="left:1050.2px;top:722.79px;font-size:12.3px;font-weight:400;color:#2e2e2e;transform:scaleX(0.9630);transform-origin:0 0;">C:\Users\stepan.kolar\Microsoft\Power BI Desktop Store ...</div>
<div class="t" style="left:1369.5px;top:722.79px;font-size:12.3px;font-weight:400;color:#2e2e2e;transform:scaleX(0.8457);transform-origin:0 0;">SK_test_11</div>
<div class="t" style="left:1472.4px;top:722.79px;font-size:12.3px;font-weight:400;color:#2e2e2e;transform:scaleX(0.9209);transform-origin:0 0;">11/12/2021 02:42:36 PM</div>
<div class="t" style="left:1665.3px;top:722.79px;font-size:12.3px;font-weight:400;color:#2e2a3a;transform:scaleX(0.9124);transform-origin:0 0;text-decoration:underline;text-underline-offset:1px;">Details</div>
<div style="position:absolute;left:247px;top:738px;width:1457px;height:19px;background:#f3f2f1;"></div>
<div class="t" style="left:472px;top:741.79px;font-size:12.3px;font-weight:400;color:#2e2e2e;transform:scaleX(0.9475);transform-origin:0 0;">dd0da6d3-97c8-4ddc-ba63-d609c17612c6.dat</div>
<div class="t" style="left:772.3px;top:741.79px;font-size:12.3px;font-weight:400;color:#2e2e2e;transform:scaleX(0.9602);transform-origin:0 0;">.dat</div>
<div class="t" style="left:1050.2px;top:741.79px;font-size:12.3px;font-weight:400;color:#2e2e2e;transform:scaleX(0.9630);transform-origin:0 0;">C:\Users\stepan.kolar\Microsoft\Power BI Desktop Store ...</div>
<div class="t" style="left:1369.5px;top:741.79px;font-size:12.3px;font-weight:400;color:#2e2e2e;transform:scaleX(0.8457);transform-origin:0 0;">SK_test_11</div>
<div class="t" style="left:1472.4px;top:741.79px;font-size:12.3px;font-weight:400;color:#2e2e2e;transform:scaleX(0.9209);transform-origin:0 0;">11/12/2021 03:09:19 PM</div>
<div class="t" style="left:1665.3px;top:741.79px;font-size:12.3px;font-weight:400;color:#2e2a3a;transform:scaleX(0.9124);transform-origin:0 0;text-decoration:underline;text-underline-offset:1px;">Details</div>
<div class="t" style="left:472px;top:760.79px;font-size:12.3px;font-weight:400;color:#2e2e2e;transform:scaleX(0.9319);transform-origin:0 0;">e3dca43e-95df-428b-b59e-eb24a2a937a7.dat</div>
<div class="t" style="left:772.3px;top:760.79px;font-size:12.3px;font-weight:400;color:#2e2e2e;transform:scaleX(0.9602);transform-origin:0 0;">.dat</div>
<div class="t" style="left:1050.2px;top:760.79px;font-size:12.3px;font-weight:400;color:#2e2e2e;transform:scaleX(0.9630);transform-origin:0 0;">C:\Users\stepan.kolar\Microsoft\Power BI Desktop Store ...</div>
<div class="t" style="left:1369.5px;top:760.79px;font-size:12.3px;font-weight:400;color:#2e2e2e;transform:scaleX(0.8334);transform-origin:0 0;">SK_test_10</div>
<div class="t" style="left:1472.4px;top:760.79px;font-size:12.3px;font-weight:400;color:#2e2e2e;transform:scaleX(0.9209);transform-origin:0 0;">11/12/2021 03:12:44 PM</div>
<div class="t" style="left:1665.3px;top:760.79px;font-size:12.3px;font-weight:400;color:#2e2a3a;transform:scaleX(0.9124);transform-origin:0 0;text-decoration:underline;text-underline-offset:1px;">Details</div>
<div style="position:absolute;left:247px;top:776px;width:1457px;height:19px;background:#f3f2f1;"></div>
<div class="t" style="left:472px;top:779.79px;font-size:12.3px;font-weight:400;color:#2e2e2e;transform:scaleX(0.9277);transform-origin:0 0;">ead4ac86-f083-41c8-b616-4d757090a900.dat</div>
<div class="t" style="left:772.3px;top:779.79px;font-size:12.3px;font-weight:400;color:#2e2e2e;transform:scaleX(0.9602);transform-origin:0 0;">.dat</div>
<div class="t" style="left:1050.2px;top:779.79px;font-size:12.3px;font-weight:400;color:#2e2e2e;transform:scaleX(0.9630);transform-origin:0 0;">C:\Users\stepan.kolar\Microsoft\Power BI Desktop Store ...</div>
<div class="t" style="left:1369.5px;top:779.79px;font-size:12.3px;font-weight:400;color:#2e2e2e;transform:scaleX(0.8423);transform-origin:0 0;">SK_test_1</div>
<div class="t" style="left:1472.4px;top:779.79px;font-size:12.3px;font-weight:400;color:#2e2e2e;transform:scaleX(0.9209);transform-origin:0 0;">11/12/2021 03:34:45 PM</div>
<div class="t" style="left:1665.3px;top:779.79px;font-size:12.3px;font-weight:400;color:#2e2a3a;transform:scaleX(0.9124);transform-origin:0 0;text-decoration:underline;text-underline-offset:1px;">Details</div>
<div class="t" style="left:472px;top:798.79px;font-size:12.3px;font-weight:400;color:#2e2e2e;transform:scaleX(0.9277);transform-origin:0 0;">ead4ac86-f083-41c8-b616-4d757090a900.dat</div>
<div class="t" style="left:772.3px;top:798.79px;font-size:12.3px;font-weight:400;color:#2e2e2e;transform:scaleX(0.9602);transform-origin:0 0;">.dat</div>
<div class="t" style="left:1050.2px;top:798.79px;font-size:12.3px;font-weight:400;color:#2e2e2e;transform:scaleX(0.9630);transform-origin:0 0;">C:\Users\stepan.kolar\Microsoft\Power BI Desktop Store ...</div>
<div class="t" style="left:1369.5px;top:798.79px;font-size:12.3px;font-weight:400;color:#2e2e2e;transform:scaleX(0.8423);transform-origin:0 0;">SK_test_3</div>
<div class="t" style="left:1472.4px;top:798.79px;font-size:12.3px;font-weight:400;color:#2e2e2e;transform:scaleX(0.9209);transform-origin:0 0;">11/12/2021 03:34:45 PM</div>
<div class="t" style="left:1665.3px;top:798.79px;font-size:12.3px;font-weight:400;color:#2e2a3a;transform:scaleX(0.9124);transform-origin:0 0;text-decoration:underline;text-underline-offset:1px;">Details</div>
<div style="position:absolute;left:247px;top:814px;width:1457px;height:19px;background:#f3f2f1;"></div>
<div class="t" style="left:472px;top:817.79px;font-size:12.3px;font-weight:400;color:#2e2e2e;transform:scaleX(0.9277);transform-origin:0 0;">ead4ac86-f083-41c8-b616-4d757090a900.dat</div>
<div class="t" style="left:772.3px;top:817.79px;font-size:12.3px;font-weight:400;color:#2e2e2e;transform:scaleX(0.9602);transform-origin:0 0;">.dat</div>
<div class="t" style="left:1050.2px;top:817.79px;font-size:12.3px;font-weight:400;color:#2e2e2e;transform:scaleX(0.9630);transform-origin:0 0;">C:\Users\stepan.kolar\Microsoft\Power BI Desktop Store ...</div>
<div class="t" style="left:1369.5px;top:817.79px;font-size:12.3px;font-weight:400;color:#2e2e2e;transform:scaleX(0.8423);transform-origin:0 0;">SK_test_4</div>
<div class="t" style="left:1472.4px;top:817.79px;font-size:12.3px;font-weight:400;color:#2e2e2e;transform:scaleX(0.9209);transform-origin:0 0;">11/12/2021 03:34:45 PM</div>
<div class="t" style="left:1665.3px;top:817.79px;font-size:12.3px;font-weight:400;color:#2e2a3a;transform:scaleX(0.9124);transform-origin:0 0;text-decoration:underline;text-underline-offset:1px;">Details</div>
<div class="t" style="left:472px;top:836.79px;font-size:12.3px;font-weight:400;color:#2e2e2e;transform:scaleX(0.9277);transform-origin:0 0;">ead4ac86-f083-41c8-b616-4d757090a900.dat</div>
<div class="t" style="left:772.3px;top:836.79px;font-size:12.3px;font-weight:400;color:#2e2e2e;transform:scaleX(0.9602);transform-origin:0 0;">.dat</div>
<div class="t" style="left:1050.2px;top:836.79px;font-size:12.3px;font-weight:400;color:#2e2e2e;transform:scaleX(0.9630);transform-origin:0 0;">C:\Users\stepan.kolar\Microsoft\Power BI Desktop Store ...</div>
<div class="t" style="left:1369.5px;top:836.79px;font-size:12.3px;font-weight:400;color:#2e2e2e;transform:scaleX(0.8423);transform-origin:0 0;">SK_test_5</div>
<div class="t" style="left:1472.4px;top:836.79px;font-size:12.3px;font-weight:400;color:#2e2e2e;transform:scaleX(0.9209);transform-origin:0 0;">11/12/2021 03:34:45 PM</div>
<div class="t" style="left:1665.3px;top:836.79px;font-size:12.3px;font-weight:400;color:#2e2a3a;transform:scaleX(0.9124);transform-origin:0 0;text-decoration:underline;text-underline-offset:1px;">Details</div>
<div style="position:absolute;left:247px;top:852px;width:1457px;height:19px;background:#f3f2f1;"></div>
<div class="t" style="left:472px;top:855.79px;font-size:12.3px;font-weight:400;color:#2e2e2e;transform:scaleX(0.9277);transform-origin:0 0;">ead4ac86-f083-41c8-b616-4d757090a900.dat</div>
<div class="t" style="left:772.3px;top:855.79px;font-size:12.3px;font-weight:400;color:#2e2e2e;transform:scaleX(0.9602);transform-origin:0 0;">.dat</div>
<div class="t" style="left:1050.2px;top:855.79px;font-size:12.3px;font-weight:400;color:#2e2e2e;transform:scaleX(0.9630);transform-origin:0 0;">C:\Users\stepan.kolar\Microsoft\Power BI Desktop Store ...</div>
<div class="t" style="left:1369.5px;top:855.79px;font-size:12.3px;font-weight:400;color:#2e2e2e;transform:scaleX(0.8423);transform-origin:0 0;">SK_test_6</div>
<div class="t" style="left:1472.4px;top:855.79px;font-size:12.3px;font-weight:400;color:#2e2e2e;transform:scaleX(0.9209);transform-origin:0 0;">11/12/2021 03:34:45 PM</div>
<div class="t" style="left:1665.3px;top:855.79px;font-size:12.3px;font-weight:400;color:#2e2a3a;transform:scaleX(0.9124);transform-origin:0 0;text-decoration:underline;text-underline-offset:1px;">Details</div>
<div class="t" style="left:472px;top:874.79px;font-size:12.3px;font-weight:400;color:#2e2e2e;transform:scaleX(0.9277);transform-origin:0 0;">ead4ac86-f083-41c8-b616-4d757090a900.dat</div>
<div class="t" style="left:772.3px;top:874.79px;font-size:12.3px;font-weight:400;color:#2e2e2e;transform:scaleX(0.9602);transform-origin:0 0;">.dat</div>
<div class="t" style="left:1050.2px;top:874.79px;font-size:12.3px;font-weight:400;color:#2e2e2e;transform:scaleX(0.9630);transform-origin:0 0;">C:\Users\stepan.kolar\Microsoft\Power BI Desktop Store ...</div>
<div class="t" style="left:1369.5px;top:874.79px;font-size:12.3px;font-weight:400;color:#2e2e2e;transform:scaleX(0.8423);transform-origin:0 0;">SK_test_7</div>
<div class="t" style="left:1472.4px;top:874.79px;font-size:12.3px;font-weight:400;color:#2e2e2e;transform:scaleX(0.9209);transform-origin:0 0;">11/12/2021 03:34:45 PM</div>
<div class="t" style="left:1665.3px;top:874.79px;font-size:12.3px;font-weight:400;color:#2e2a3a;transform:scaleX(0.9124);transform-origin:0 0;text-decoration:underline;text-underline-offset:1px;">Details</div>
<div style="position:absolute;left:247px;top:890px;width:1457px;height:19px;background:#f3f2f1;"></div>
<div class="t" style="left:472px;top:893.79px;font-size:12.3px;font-weight:400;color:#2e2e2e;transform:scaleX(0.9277);transform-origin:0 0;">ead4ac86-f083-41c8-b616-4d757090a900.dat</div>
<div class="t" style="left:772.3px;top:893.79px;font-size:12.3px;font-weight:400;color:#2e2e2e;transform:scaleX(0.9602);transform-origin:0 0;">.dat</div>
<div class="t" style="left:1050.2px;top:893.79px;font-size:12.3px;font-weight:400;color:#2e2e2e;transform:scaleX(0.9630);transform-origin:0 0;">C:\Users\stepan.kolar\Microsoft\Power BI Desktop Store ...</div>
<div class="t" style="left:1369.5px;top:893.79px;font-size:12.3px;font-weight:400;color:#2e2e2e;transform:scaleX(0.8423);transform-origin:0 0;">SK_test_8</div>
<div class="t" style="left:1472.4px;top:893.79px;font-size:12.3px;font-weight:400;color:#2e2e2e;transform:scaleX(0.9209);transform-origin:0 0;">11/12/2021 03:34:45 PM</div>
<div class="t" style="left:1665.3px;top:893.79px;font-size:12.3px;font-weight:400;color:#2e2a3a;transform:scaleX(0.9124);transform-origin:0 0;text-decoration:underline;text-underline-offset:1px;">Details</div>
<div class="t" style="left:472px;top:912.79px;font-size:12.3px;font-weight:400;color:#2e2e2e;transform:scaleX(0.9277);transform-origin:0 0;">ead4ac86-f083-41c8-b616-4d757090a900.dat</div>
<div class="t" style="left:772.3px;top:912.79px;font-size:12.3px;font-weight:400;color:#2e2e2e;transform:scaleX(0.9602);transform-origin:0 0;">.dat</div>
<div class="t" style="left:1050.2px;top:912.79px;font-size:12.3px;font-weight:400;color:#2e2e2e;transform:scaleX(0.9630);transform-origin:0 0;">C:\Users\stepan.kolar\Microsoft\Power BI Desktop Store ...</div>
<div class="t" style="left:1369.5px;top:912.79px;font-size:12.3px;font-weight:400;color:#2e2e2e;transform:scaleX(0.8423);transform-origin:0 0;">SK_test_9</div>
<div class="t" style="left:1472.4px;top:912.79px;font-size:12.3px;font-weight:400;color:#2e2e2e;transform:scaleX(0.9209);transform-origin:0 0;">11/12/2021 03:34:45 PM</div>
<div class="t" style="left:1665.3px;top:912.79px;font-size:12.3px;font-weight:400;color:#2e2a3a;transform:scaleX(0.9124);transform-origin:0 0;text-decoration:underline;text-underline-offset:1px;">Details</div>
<div style="position:absolute;left:247px;top:928px;width:1457px;height:19px;background:#f3f2f1;"></div>
<div class="t" style="left:472px;top:931.79px;font-size:12.3px;font-weight:400;color:#2e2e2e;transform:scaleX(0.9277);transform-origin:0 0;">ead4ac86-f083-41c8-b616-4d757090a900.dat</div>
<div class="t" style="left:772.3px;top:931.79px;font-size:12.3px;font-weight:400;color:#2e2e2e;transform:scaleX(0.9602);transform-origin:0 0;">.dat</div>
<div class="t" style="left:1050.2px;top:931.79px;font-size:12.3px;font-weight:400;color:#2e2e2e;transform:scaleX(0.9630);transform-origin:0 0;">C:\Users\stepan.kolar\Microsoft\Power BI Desktop Store ...</div>
<div class="t" style="left:1369.5px;top:931.79px;font-size:12.3px;font-weight:400;color:#2e2e2e;transform:scaleX(0.8334);transform-origin:0 0;">SK_test_10</div>
<div class="t" style="left:1472.4px;top:931.79px;font-size:12.3px;font-weight:400;color:#2e2e2e;transform:scaleX(0.9209);transform-origin:0 0;">11/12/2021 03:34:45 PM</div>
<div class="t" style="left:1665.3px;top:931.79px;font-size:12.3px;font-weight:400;color:#2e2a3a;transform:scaleX(0.9124);transform-origin:0 0;text-decoration:underline;text-underline-offset:1px;">Details</div>
<div class="t" style="left:472px;top:950.79px;font-size:12.3px;font-weight:400;color:#2e2e2e;transform:scaleX(0.9277);transform-origin:0 0;">ead4ac86-f083-41c8-b616-4d757090a900.dat</div>
<div class="t" style="left:772.3px;top:950.79px;font-size:12.3px;font-weight:400;color:#2e2e2e;transform:scaleX(0.9602);transform-origin:0 0;">.dat</div>
<div class="t" style="left:1050.2px;top:950.79px;font-size:12.3px;font-weight:400;color:#2e2e2e;transform:scaleX(0.9630);transform-origin:0 0;">C:\Users\stepan.kolar\Microsoft\Power BI Desktop Store ...</div>
<div class="t" style="left:1369.5px;top:950.79px;font-size:12.3px;font-weight:400;color:#2e2e2e;transform:scaleX(0.8457);transform-origin:0 0;">SK_test_11</div>
<div class="t" style="left:1472.4px;top:950.79px;font-size:12.3px;font-weight:400;color:#2e2e2e;transform:scaleX(0.9209);transform-origin:0 0;">11/12/2021 03:34:45 PM</div>
<div class="t" style="left:1665.3px;top:950.79px;font-size:12.3px;font-weight:400;color:#2e2a3a;transform:scaleX(0.9124);transform-origin:0 0;text-decoration:underline;text-underline-offset:1px;">Details</div>
<div style="position:absolute;left:247px;top:966px;width:1457px;height:19px;background:#f3f2f1;"></div>
<div class="t" style="left:472px;top:969.79px;font-size:12.3px;font-weight:400;color:#2e2e2e;transform:scaleX(0.9277);transform-origin:0 0;">ead4ac86-f083-41c8-b616-4d757090a900.dat</div>
<div class="t" style="left:772.3px;top:969.79px;font-size:12.3px;font-weight:400;color:#2e2e2e;transform:scaleX(0.9602);transform-origin:0 0;">.dat</div>
<div class="t" style="left:1050.2px;top:969.79px;font-size:12.3px;font-weight:400;color:#2e2e2e;transform:scaleX(0.9630);transform-origin:0 0;">C:\Users\stepan.kolar\Microsoft\Power BI Desktop Store ...</div>
<div class="t" style="left:1369.5px;top:969.79px;font-size:12.3px;font-weight:400;color:#2e2e2e;transform:scaleX(0.8423);transform-origin:0 0;">SK_test_2</div>
<div class="t" style="left:1472.4px;top:969.79px;font-size:12.3px;font-weight:400;color:#2e2e2e;transform:scaleX(0.9209);transform-origin:0 0;">11/12/2021 03:35:10 PM</div>
<div class="t" style="left:1665.3px;top:969.79px;font-size:12.3px;font-weight:400;color:#2e2a3a;transform:scaleX(0.9124);transform-origin:0 0;text-decoration:underline;text-underline-offset:1px;">Details</div>
<div class="t" style="left:472px;top:988.79px;font-size:12.3px;font-weight:400;color:#2e2e2e;transform:scaleX(0.9752);transform-origin:0 0;">file-2225.txt</div>
<div class="t" style="left:772.3px;top:988.79px;font-size:12.3px;font-weight:400;color:#2e2e2e;transform:scaleX(1.0179);transform-origin:0 0;">.txt</div>
<div class="t" style="left:1050.2px;top:988.79px;font-size:12.3px;font-weight:400;color:#2e2e2e;transform:scaleX(0.9680);transform-origin:0 0;">\\nasa.safetica.com\shared\SK\Test data\HR\Annual Rep...</div>
<div class="t" style="left:1369.5px;top:988.79px;font-size:12.3px;font-weight:400;color:#2e2e2e;transform:scaleX(0.8423);transform-origin:0 0;">SK_test_8</div>
<div class="t" style="left:1472.4px;top:988.79px;font-size:12.3px;font-weight:400;color:#2e2e2e;transform:scaleX(0.9209);transform-origin:0 0;">11/12/2021 03:40:29 PM</div>
<div class="t" style="left:1665.3px;top:988.79px;font-size:12.3px;font-weight:400;color:#2e2a3a;transform:scaleX(0.9124);transform-origin:0 0;text-decoration:underline;text-underline-offset:1px;">Details</div>
<div style="position:absolute;left:247px;top:1004px;width:1457px;height:19px;background:#f3f2f1;"></div>
<div class="t" style="left:472px;top:1007.79px;font-size:12.3px;font-weight:400;color:#2e2e2e;transform:scaleX(0.9895);transform-origin:0 0;">Corporations.txt</div>
<div class="t" style="left:772.3px;top:1007.79px;font-size:12.3px;font-weight:400;color:#2e2e2e;transform:scaleX(1.0179);transform-origin:0 0;">.txt</div>
<div class="t" style="left:1050.2px;top:1007.79px;font-size:12.3px;font-weight:400;color:#2e2e2e;transform:scaleX(0.9512);transform-origin:0 0;">c:\Users\stepan.kolar.SAFETICA\Desktop\bad_files\Corpor...</div>
<div class="t" style="left:1369.5px;top:1007.79px;font-size:12.3px;font-weight:400;color:#2e2e2e;transform:scaleX(0.8423);transform-origin:0 0;">SK_test_2</div>
<div class="t" style="left:1472.4px;top:1007.79px;font-size:12.3px;font-weight:400;color:#2e2e2e;transform:scaleX(0.9209);transform-origin:0 0;">11/12/2021 04:00:57 PM</div>
<div class="t" style="left:1665.3px;top:1007.79px;font-size:12.3px;font-weight:400;color:#2e2a3a;transform:scaleX(0.9124);transform-origin:0 0;text-decoration:underline;text-underline-offset:1px;">Details</div>
<div class="t" style="left:472px;top:1026.79px;font-size:12.3px;font-weight:400;color:#2e2e2e;transform:scaleX(0.9665);transform-origin:0 0;">GnumericTest.gnumeric</div>
<div class="t" style="left:772.3px;top:1026.79px;font-size:12.3px;font-weight:400;color:#2e2e2e;transform:scaleX(0.9833);transform-origin:0 0;">.gnumeric</div>
<div class="t" style="left:1050.2px;top:1026.79px;font-size:12.3px;font-weight:400;color:#2e2e2e;transform:scaleX(0.9511);transform-origin:0 0;">c:\Users\stepan.kolar.SAFETICA\Desktop\bad_files\Gnum...</div>
<div class="t" style="left:1369.5px;top:1026.79px;font-size:12.3px;font-weight:400;color:#2e2e2e;transform:scaleX(0.8423);transform-origin:0 0;">SK_test_2</div>
<div class="t" style="left:1472.4px;top:1026.79px;font-size:12.3px;font-weight:400;color:#2e2e2e;transform:scaleX(0.9209);transform-origin:0 0;">11/12/2021 04:00:57 PM</div>
<div class="t" style="left:1665.3px;top:1026.79px;font-size:12.3px;font-weight:400;color:#2e2a3a;transform:scaleX(0.9124);transform-origin:0 0;text-decoration:underline;text-underline-offset:1px;">Details</div>
<div style="position:absolute;left:247px;top:1042px;width:1457px;height:4px;background:#f3f2f1;"></div>
<div style="position:absolute;left:1710px;top:880px;width:7px;height:67px;background:#c4c6c4;"></div>
<div class="t" style="left:257.5px;top:1056.87px;font-size:11.5px;font-weight:400;color:#333;transform:scaleX(1.0927);transform-origin:0 0;-webkit-text-stroke:0.35px currentColor;">«</div>
<div class="t" style="left:282px;top:1056.87px;font-size:11.5px;font-weight:400;color:#333;transform:scaleX(1.0927);transform-origin:0 0;-webkit-text-stroke:0.35px currentColor;">»</div>
<div style="position:absolute;left:301px;top:1053px;width:277px;height:21px;box-sizing:border-box;border:1px solid #c8c8c8;background:#ffffff;"></div>
<svg style="position:absolute;left:303px;top:1055px" width="18" height="18" viewBox="0 0 18 18"><path d="M5.5 12.5 L14 4 L16.2 6.2 L7.7 14.7 Z" fill="#7a7a7a"/><path d="M5.5 12.5 L4.2 16 L7.7 14.7 Z" fill="#7a7a7a"/><path d="M2.5 16.6 L12 16.6" stroke="#b4b4b4" stroke-width="1.4"/></svg>
<div class="t" style="left:592.8px;top:1057.79px;font-size:12.3px;font-weight:400;color:#333;transform:scaleX(0.9486);transform-origin:0 0;">0 of 0</div>
<svg style="position:absolute;left:627px;top:1057px" width="13" height="13" viewBox="0 0 13 13"><path d="M1.8 1.8 L11.2 11.2 M11.2 1.8 L1.8 11.2" stroke="#8a8a8a" stroke-width="1.9"/></svg>
<div class="t" style="left:1638.8px;top:1058.09px;font-size:12.3px;font-weight:400;color:#333;transform:scaleX(0.8890);transform-origin:0 0;">Selected: 1</div>
<div class="t" style="left:246.8px;top:1092.49px;font-size:12.3px;font-weight:700;color:#333;transform:scaleX(0.8829);transform-origin:0 0;">Filters:</div>
<div class="t" style="left:287.8px;top:1092.49px;font-size:12.3px;font-weight:400;color:#333;transform:scaleX(0.9755);transform-origin:0 0;">No active filters</div>
<div style="position:absolute;left:375px;top:1086px;width:88px;height:23px;background:#cdcdcd;"></div>
<div class="t" style="left:382.5px;top:1092.19px;font-size:12.3px;font-weight:400;color:#98a498;transform:scaleX(0.9434);transform-origin:0 0;">Clear all filters</div>
<div style="position:absolute;left:1732px;top:671px;width:150px;height:445px;box-sizing:border-box;border:1px solid #c9c9c9;background:#ffffff;"></div>
<div style="position:absolute;left:1733px;top:672px;width:148px;height:20px;background:#f3f2f1;"></div>
<div class="t" style="left:1733.8px;top:675.79px;font-size:12.3px;font-weight:400;color:#333;transform:scaleX(0.9746);transform-origin:0 0;">Domain</div>
<div class="t" style="left:1733.8px;top:694.89px;font-size:12.3px;font-weight:400;color:#333;transform:scaleX(0.9228);transform-origin:0 0;">User name</div>
<div style="position:absolute;left:1733px;top:711px;width:148px;height:19px;background:#f3f2f1;"></div>
<div class="t" style="left:1733.8px;top:713.99px;font-size:12.3px;font-weight:400;color:#333;transform:scaleX(0.9682);transform-origin:0 0;">Operation</div>
<div class="t" style="left:1733.8px;top:733.09px;font-size:12.3px;font-weight:400;color:#333;transform:scaleX(0.9708);transform-origin:0 0;">Tagging type</div>
<div style="position:absolute;left:1733px;top:749px;width:148px;height:19px;background:#f3f2f1;"></div>
<div class="t" style="left:1733.8px;top:752.19px;font-size:12.3px;font-weight:400;color:#333;transform:scaleX(0.8424);transform-origin:0 0;">PC</div>
<div class="t" style="left:1733.8px;top:771.29px;font-size:12.3px;font-weight:400;color:#333;transform:scaleX(0.9971);transform-origin:0 0;">Application</div>
</body></html>
